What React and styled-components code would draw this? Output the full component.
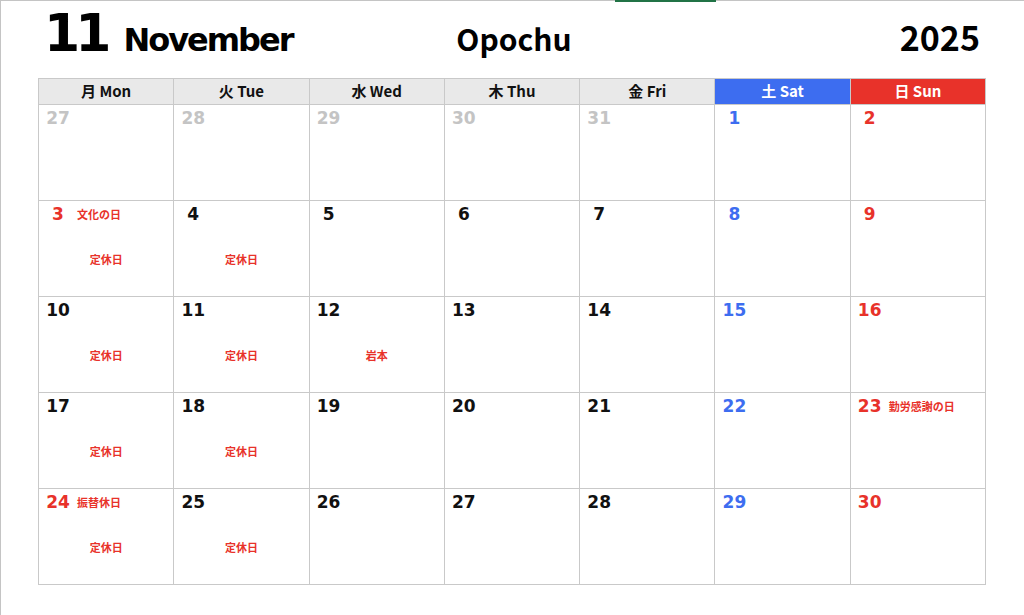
import React from "react";
import styled, { createGlobalStyle } from "styled-components";

const RED = "#e8322a";
const BLUE = "#3d6df0";
const LINE = "#c9c9c9";

const GlobalStyle = createGlobalStyle`
  html, body {
    margin: 0;
    padding: 0;
    background: #ffffff;
    overflow: hidden;
  }
`;

const DAYS = [
  { jp: "月", en: "Mon" },
  { jp: "火", en: "Tue" },
  { jp: "水", en: "Wed" },
  { jp: "木", en: "Thu" },
  { jp: "金", en: "Fri" },
  { jp: "土", en: "Sat", tone: "sat" },
  { jp: "日", en: "Sun", tone: "sun" },
];

// 11月のカレンダー（前月の日付はグレー）
const WEEKS = [
  [
    { n: 27, muted: true },
    { n: 28, muted: true },
    { n: 29, muted: true },
    { n: 30, muted: true },
    { n: 31, muted: true },
    { n: 1 },
    { n: 2 },
  ],
  [
    { n: 3, holiday: "文化の日", note: "定休日" },
    { n: 4, note: "定休日" },
    { n: 5 },
    { n: 6 },
    { n: 7 },
    { n: 8 },
    { n: 9 },
  ],
  [
    { n: 10, note: "定休日" },
    { n: 11, note: "定休日" },
    { n: 12, note: "岩本" },
    { n: 13 },
    { n: 14 },
    { n: 15 },
    { n: 16 },
  ],
  [
    { n: 17, note: "定休日" },
    { n: 18, note: "定休日" },
    { n: 19 },
    { n: 20 },
    { n: 21 },
    { n: 22 },
    { n: 23, holiday: "勤労感謝の日" },
  ],
  [
    { n: 24, holiday: "振替休日", note: "定休日" },
    { n: 25, note: "定休日" },
    { n: 26 },
    { n: 27 },
    { n: 28 },
    { n: 29 },
    { n: 30 },
  ],
];

function numberColor(day, col) {
  if (day.muted) return "#c4c4c4";
  if (day.holiday || col === 6) return RED;
  if (col === 5) return BLUE;
  return "#111111";
}

function App() {
  return (
    <Page>
      <GlobalStyle />
      <TabMark />
      <Header>
        <MonthTitle>
          <MonthNumber>11</MonthNumber>
          <MonthName>November</MonthName>
        </MonthTitle>
        <ShopName>Opochu</ShopName>
        <Year>2025</Year>
      </Header>

      <Calendar>
        {DAYS.map((d) => (
          <DayHead key={d.en} $tone={d.tone}>
            {d.jp} {d.en}
          </DayHead>
        ))}
        {WEEKS.map((week, w) =>
          week.map((day, c) => (
            <Cell key={`${w}-${c}`}>
              <TopLine>
                <DateNum $color={numberColor(day, c)}>{day.n}</DateNum>
                {day.holiday && <Holiday>{day.holiday}</Holiday>}
              </TopLine>
              {day.note && <Note>{day.note}</Note>}
            </Cell>
          ))
        )}
      </Calendar>
    </Page>
  );
}

const Page = styled.div`
  position: relative;
  box-sizing: border-box;
  width: 1024px;
  height: 615px;
  border-top: 1px solid #c4c4c4;
  border-left: 1px solid #c4c4c4;
  padding-left: 37px;
`;

const TabMark = styled.div`
  position: absolute;
  top: -1px;
  left: 614px;
  width: 101px;
  height: 2px;
  background: #217346;
`;

const Header = styled.div`
  box-sizing: border-box;
  width: 948px;
  height: 77px;
  padding: 6px 6px 0 6px;
  display: grid;
  grid-template-columns: 1fr auto 1fr;
  align-items: baseline;
`;

const MonthTitle = styled.div`
  display: flex;
  align-items: baseline;
  gap: 17px;
  color: #000;
`;

const MonthNumber = styled.span`
  font-family: "DejaVu Sans", Verdana, sans-serif;
  font-weight: bold;
  font-size: 52px;
  line-height: 1;
  letter-spacing: -5px;
`;

const MonthName = styled.span`
  font-family: "DejaVu Sans", Verdana, sans-serif;
  font-weight: bold;
  font-size: 32px;
  line-height: 1;
  letter-spacing: -2px;
`;

const ShopName = styled.div`
  font-family: "Noto Sans CJK JP", "Noto Sans", sans-serif;
  font-weight: bold;
  font-size: 30px;
  line-height: 1;
  color: #000;
  margin-left: 4px;
`;

const Year = styled.div`
  justify-self: end;
  font-family: "Noto Sans CJK JP", "Noto Sans", sans-serif;
  font-weight: bold;
  font-size: 34px;
  line-height: 1;
  color: #000;
`;

const Calendar = styled.div`
  box-sizing: border-box;
  width: 948px;
  display: grid;
  grid-template-columns: repeat(7, 1fr);
  grid-template-rows: 26px repeat(5, 96px);
  border-top: 1px solid ${LINE};
  border-left: 1px solid ${LINE};
`;

const DayHead = styled.div`
  display: flex;
  align-items: center;
  justify-content: center;
  padding-bottom: 2px;
  border-right: 1px solid ${LINE};
  border-bottom: 1px solid ${LINE};
  background: ${(p) =>
    p.$tone === "sat" ? BLUE : p.$tone === "sun" ? RED : "#e9e9e9"};
  color: ${(p) => (p.$tone ? "#ffffff" : "#111111")};
  font-family: "Noto Sans CJK JP", "Noto Sans", sans-serif;
  font-weight: bold;
  font-size: 15px;
`;

const Cell = styled.div`
  box-sizing: border-box;
  display: flex;
  flex-direction: column;
  padding: 3px 6px 0 6px;
  border-right: 1px solid ${LINE};
  border-bottom: 1px solid ${LINE};
  background: #ffffff;
`;

const TopLine = styled.div`
  display: flex;
  align-items: center;
  height: 20px;
`;

const DateNum = styled.span`
  width: 26px;
  text-align: center;
  font-family: "DejaVu Sans", "Liberation Sans", sans-serif;
  font-weight: bold;
  font-size: 17px;
  color: ${(p) => p.$color};
`;

const Holiday = styled.span`
  margin-left: 6px;
  font-family: "Noto Sans CJK JP", "Noto Sans", sans-serif;
  font-weight: bold;
  font-size: 11px;
  color: ${RED};
`;

const Note = styled.div`
  margin-top: 28px;
  text-align: center;
  font-family: "Noto Sans CJK JP", "Noto Sans", sans-serif;
  font-weight: bold;
  font-size: 11px;
  line-height: 14px;
  color: ${RED};
`;

export default App;
